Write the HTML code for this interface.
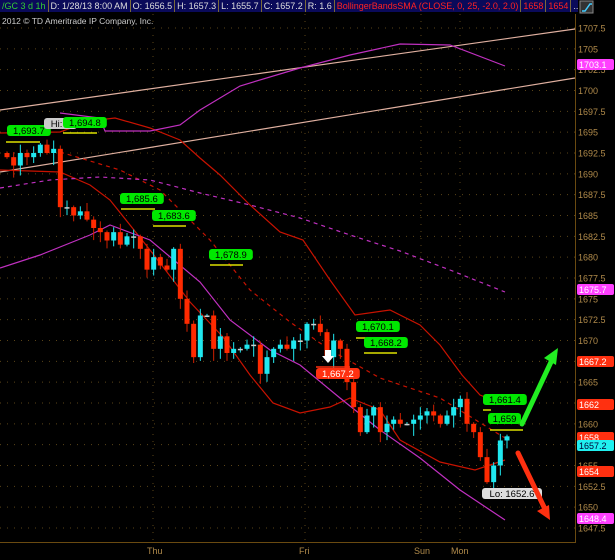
<!DOCTYPE html>
<html><head><meta charset="utf-8"><style>
body{margin:0;background:#000;width:615px;height:560px;overflow:hidden;font-family:"Liberation Sans",sans-serif}
#top{position:absolute;left:0;top:0;width:578px;height:12px;background:#0a0a5a;display:flex;font-size:9px;line-height:12px;color:#ddd;overflow:hidden}
#top div{border-right:1px solid #7a6a3a;padding:0 2px;white-space:nowrap}
svg{position:absolute;left:0;top:0}
</style></head><body>
<div id="top"><div style="color:#3c3">/GC 3 d 1h</div><div>D: 1/28/13 8:00 AM</div><div>O: 1656.5</div><div>H: 1657.3</div><div>L: 1655.7</div><div>C: 1657.2</div><div>R: 1.6</div><div style="color:#f22">BollingerBandsSMA (CLOSE, 0, 25, -2.0, 2.0)</div><div style="color:#f22">1658</div><div style="color:#f22">1654</div><div>...</div></div>
<svg width="615" height="560" id="s" xmlns="http://www.w3.org/2000/svg" font-family="Liberation Sans, sans-serif">
<rect x="580" y="1" width="13" height="12" fill="#333" stroke="#888"/>
<path d="M582 11h3l5-7h2" stroke="#4cf" fill="none" stroke-width="1.5"/>
<text x="2" y="24" fill="#ccc" font-size="8.5">2012 © TD Ameritrade IP Company, Inc.</text>
<g id="grid"></g>
<line x1="575.5" y1="14" x2="575.5" y2="542" stroke="#6a4a10"/>
<line x1="0" y1="542.5" x2="576" y2="542.5" stroke="#6a4a10"/>
<g font-size="9" fill="#b08a4a"><text x="147" y="554">Thu</text><text x="299" y="554">Fri</text><text x="414" y="554">Sun</text><text x="451" y="554">Mon</text></g>
<g fill="none" stroke-width="1.2">
<line x1="0" y1="110" x2="575" y2="29" stroke="#e0b0a0"/>
<line x1="0" y1="172" x2="575" y2="78" stroke="#e0b0a0"/>
<polyline stroke="#c81200" points="0,133 60,132 90,121 115,118 150,128 180,140 200,158 220,175 250,205 280,232 303,240 330,280 355,315 390,310 420,325 440,345 462,375 480,395 505,405"/>
<polyline stroke="#c81200" points="0,170 60,172 90,185 110,200 150,250 190,302 223,337 250,375 273,403 300,413 330,407 350,398 380,410 400,440 440,462 475,470 505,460"/>
<polyline stroke="#c81200" stroke-dasharray="4,4" points="60,152 120,170 160,190 210,240 250,290 290,322 330,350 380,378 440,398 505,438"/>
<polyline stroke="#c030c0" points="60,113 100,118 105,131 150,131 180,125 200,110 240,86 300,68 350,55 400,44 450,45 505,66"/>
<polyline stroke="#c030c0" points="0,268 40,255 90,235 110,225 150,240 200,282 230,320 270,350 300,365 340,398 380,430 420,458 460,490 505,520"/>
<polyline stroke="#c030c0" stroke-dasharray="4,4" points="0,188 50,180 100,177 150,180 200,193 250,205 300,218 350,235 400,251 450,270 505,292"/>
</g>
<g id="c"></g>
<g stroke="#dde000" stroke-width="1.5">
<line x1="6" y1="142" x2="40" y2="142"/><line x1="63" y1="133" x2="97" y2="133"/><line x1="121" y1="209" x2="155" y2="209"/><line x1="153" y1="226" x2="186" y2="226"/><line x1="210" y1="265" x2="243" y2="265"/><line x1="356" y1="338" x2="370" y2="338"/><line x1="364" y1="353" x2="397" y2="353"/><line x1="483" y1="410" x2="491" y2="410"/><line x1="490" y1="430" x2="523" y2="430"/>
</g>
<line x1="316" y1="367" x2="350" y2="367" stroke="#ff3010" stroke-width="1.5"/>
<g font-size="9.5" text-anchor="middle" id="lb"></g>
<path d="M325 350h6v6h3l-6 7-6-7h3z" fill="#fff"/>
<path d="M522 424L551 362" stroke="#22ee22" stroke-width="5" stroke-linecap="round"/>
<path d="M558 348l-14 10 12 7z" fill="#22ee22"/>
<path d="M518 453L544 507" stroke="#ff3010" stroke-width="5" stroke-linecap="round"/>
<path d="M550 520l-13-9 12-6z" fill="#ff3010"/>
<g id="ax" font-size="9" fill="#b08a4a"></g>
</svg>
<script>
var NS="http://www.w3.org/2000/svg";
function el(p,t,a,txt){var e=document.createElementNS(NS,t);for(var k in a)e.setAttribute(k,a[k]);if(txt)e.textContent=txt;p.appendChild(e);return e;}
function Y(p){return 28+(1707.5-p)*8.333;}
var g=document.getElementById('grid'),ax=document.getElementById('ax');
var R=[[65,'1703.1','#ff40ff'],[290,'1675.7','#ff40ff'],[362,'1667.2','#ff3010'],[405,'1662','#ff3010'],[438,'1658','#ff3010'],[446,'1657.2','#20f0f0'],[472,'1654','#ff3010'],[519,'1648.4','#ff40ff']];
for(var p=1707.5;p>=1647.4;p-=2.5){var y=Y(p);el(g,'line',{x1:0,x2:575,y1:y,y2:y,stroke:'#5a4418','stroke-dasharray':'1,6'});el(ax,'text',{x:578,y:y+3.5},(p%1?p.toFixed(1):p.toFixed(0)));}
[153,305,421,460].forEach(function(x){el(g,'line',{x1:x,x2:x,y1:14,y2:542,stroke:'#5a4418','stroke-dasharray':'1,6'});});
var C=[1692,1691,1692.5,1692,1692.5,1693.5,1692.5,1693,1686,1686,1685,1685.5,1684.5,1683.5,1683,1682,1683,1681.5,1682.5,1682.5,1681,1678.5,1680,1679,1678.5,1681,1675,1672,1668,1673,1673,1669,1670.5,1668.5,1669,1669,1669.5,1669.5,1666,1668,1669,1669.5,1669,1670,1670,1672,1672,1671,1668,1670,1669,1665,1662,1659,1661,1662,1659,1660,1660.5,1660,1660,1660.5,1661,1661.5,1661,1660,1661,1662,1663,1660,1659,1656,1653,1655,1658,1658.5];
var cg=document.getElementById('c'),n=C.length,o=1692.5;
for(var i=0;i<n;i++){var x=7+i*(500/(n-1)),c=C[i],hi=Math.max(o,c)+0.2+((i*7)%5)*0.2,lo=Math.min(o,c)-0.2-((i*11)%6)*0.25;var up=c>=o,col=up?'#20e8f0':'#ff2a00';if(Math.abs(c-o)<0.3)col='#ccc';
el(cg,'line',{x1:x,x2:x,y1:Y(hi),y2:Y(lo),stroke:up?'#20e8f0':'#d02000'});
var t=Y(Math.max(o,c)),b=Y(Math.min(o,c));el(cg,'rect',{x:x-2.5,y:t,width:5,height:Math.max(1.5,b-t),fill:col});o=c;}
var L=[[7,125,'1,693.7','#00e800'],[44,118,'Hi: 1','#ccc'],[63,117,'1,694.8','#00e800'],[120,193,'1,685.6','#00e800'],[152,210,'1,683.6','#00e800'],[209,249,'1,678.9','#00e800'],[356,321,'1,670.1','#00e800'],[364,337,'1,668.2','#00e800'],[483,394,'1,661.4','#00e800'],[488,413,'1,659','#00e800'],[316,368,'1,667.2','#ff3010'],[482,488,'Lo: 1652.6','#ddd']];
var lb=document.getElementById('lb');
L.forEach(function(a){var w=a[2].length*5.4+6;el(lb,'rect',{x:a[0],y:a[1],width:w,height:11,rx:3,fill:a[3]});el(lb,'text',{x:a[0]+w/2,y:a[1]+9,fill:a[3]=='#ff3010'?'#fff':'#000'},a[2]);});
R.forEach(function(a){el(ax,'rect',{x:577,y:a[0]-6,width:37,height:11,rx:2,fill:a[2]});el(ax,'text',{x:579,y:a[0]+3,fill:a[2]=='#20f0f0'?'#003':'#fff'},a[1]);});
</script>
</body></html>
